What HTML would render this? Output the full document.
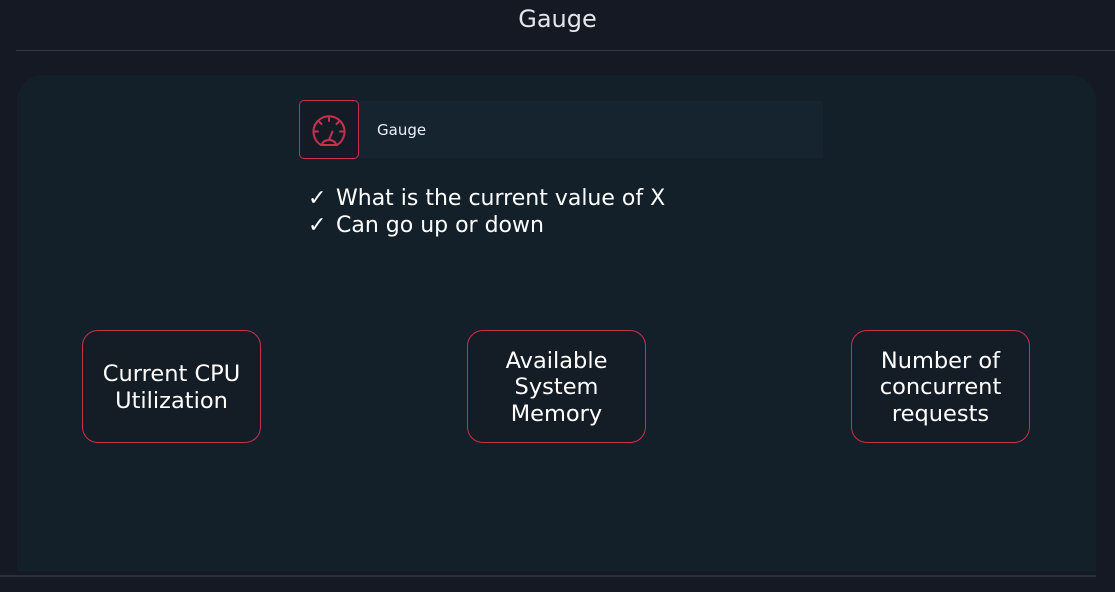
<!DOCTYPE html>
<html><head><meta charset="utf-8"><style>
body{margin:0;width:1115px;height:592px;background:#141923;position:relative;overflow:hidden;font-family:"DejaVu Sans","Liberation Sans",sans-serif;color:#fff}
.title{position:absolute;top:5px;left:0;width:1115px;text-align:center;font-size:24px;color:#e4e6ea}
.hl{position:absolute;top:50px;left:16px;right:0;height:1px;background:#2f3541}
.panel{position:absolute;left:17px;top:75px;width:1079px;height:497px;background:#13202a;border-radius:26px 26px 0 0}
.bl{position:absolute;top:575px;left:0;width:1096px;height:2px;background:#2a303b}
.icon{position:absolute;left:299px;top:100px;width:58px;height:57px;border:1.5px solid #c8304f;border-radius:5px;background:#141b24}
.bar{position:absolute;left:359px;top:101px;width:464px;height:57px;background:#15242f}
.bar span{position:absolute;left:18px;top:20px;font-size:15px;color:#eef}
.list{position:absolute;left:308px;top:186px;font-size:22px;line-height:26.5px;color:#fff}
.list div{position:relative;padding-left:28px}
.list div b{position:absolute;left:0;font-weight:normal}
.box{position:absolute;top:330px;width:177px;height:111px;border:1.5px solid #c8304f;border-radius:16px;background:#141c25;display:flex;align-items:center;justify-content:center;text-align:center;font-size:22.5px;line-height:26.5px;padding-top:2px;box-sizing:content-box}
</style></head><body>
<div class="title">Gauge</div>
<div class="hl"></div>
<div class="panel"></div>
<div class="bl"></div>
<div class="bar"><span>Gauge</span></div>
<div class="icon"><svg width="58" height="57" viewBox="0 0 58 57"><g fill="none" stroke="#c8304f" stroke-width="2" stroke-linecap="round"><path d="M21 44 A15.5 15.5 0 1 1 37 44"/><path d="M29 17v3M19.5 21l2 2M38.5 21l-2 2M15 30.5h3M43 30.5h-3"/><path d="M29 39l3.5-8.5"/><path d="M22 44h14a7 5 0 0 0-14 0z"/></g></svg></div>
<div class="list"><div><b>✓</b>What is the current value of X</div><div><b>✓</b>Can go up or down</div></div>
<div class="box" style="left:82px;height:109px">Current CPU<br>Utilization</div>
<div class="box" style="left:467px;height:109px">Available<br>System<br>Memory</div>
<div class="box" style="left:851px;height:109px">Number of<br>concurrent<br>requests</div>
</body></html>
